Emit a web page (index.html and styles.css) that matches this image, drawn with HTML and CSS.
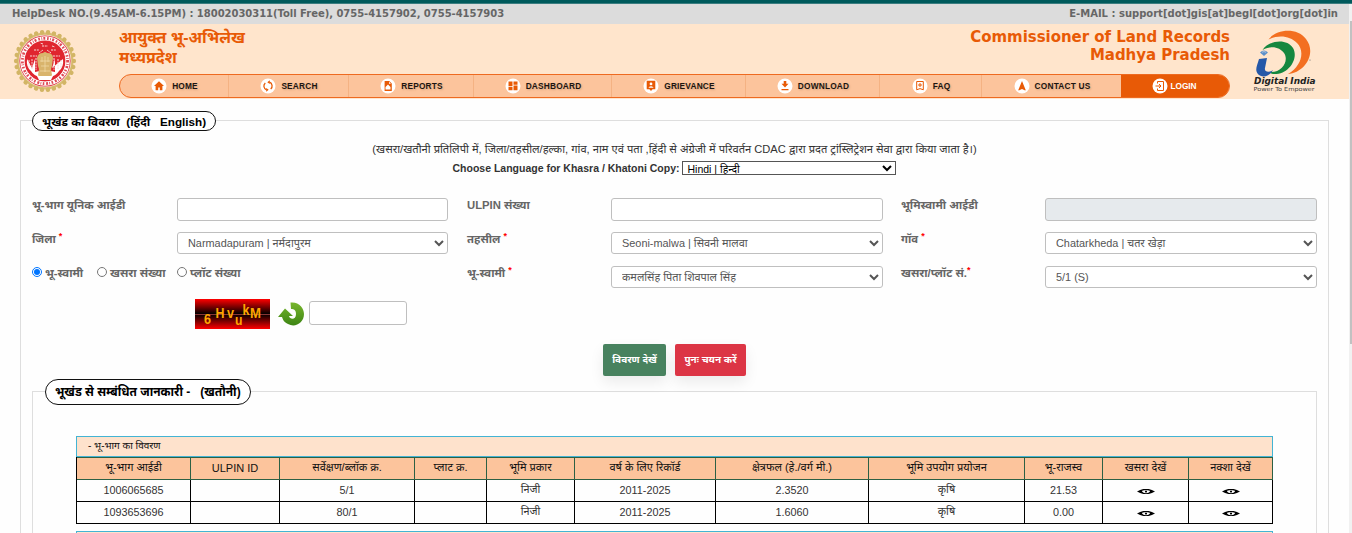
FILE: index.html
```html
<!DOCTYPE html>
<html lang="hi">
<head>
<meta charset="utf-8">
<title>Commissioner of Land Records</title>
<link rel="stylesheet" href="styles.css">
</head>
<body>
<div class="teal"></div>
<div class="helpbar"><span class="help-l">HelpDesk NO.(9.45AM-6.15PM) : 18002030311(Toll Free), 0755-4157902, 0755-4157903</span><span class="help-r">E-MAIL : support[dot]gis[at]begl[dot]org[dot]in</span></div>
<header class="header">
  <svg class="emblem" viewBox="0 0 64 64">
    <circle cx="32" cy="32" r="28.500" fill="#d8bd72"/>
    <circle cx="32" cy="32" r="28.900" fill="none" stroke="#d2b565" stroke-width="4.400" stroke-linecap="round" stroke-dasharray="0.1 5.944"/>
    <circle cx="32" cy="32" r="26.300" fill="#f6e6dc"/>
    <circle cx="32" cy="32" r="25.600" fill="#e0353f"/>
    <circle cx="32" cy="32" r="22.600" fill="none" stroke="#fff" stroke-width="4.400"/>
    <circle cx="32" cy="32" r="22.600" fill="none" stroke="#df4a55" stroke-width="2.800" stroke-dasharray="1.6 1.5 .8 1.2 2 1.9"/>
    <circle cx="32" cy="32" r="20" fill="#e0252f"/>
    <path d="M14 30q-1 8 4 12 3 5 9 6v-6l-5 1v-13l-3 9zM50 30q1 8-4 12-3 5-9 6v-6l5 1v-13l-3 9z" fill="#fff"/>
    <path d="M17 27h7M40 27h7M21 21h5M38 21h5M29 17h6M26 24l4-3M38 24l-4-3M30 15l-3-1M39 17l3 1M16 31v8M19 30v10M23 29v12M41 29v12M45 30v10M48 31v8" fill="none" stroke="#f8d8d8" stroke-width="1" stroke-dasharray="2 .8"/>
    <path d="M24 29q1-5 6-5 2-2 4 0 6 0 6 5l-1 8-1 3 1 6-2 3h-10l-2-3 1-6-1-3z" fill="#d9b46c"/>
    <path d="M27 32h10M28 37h8M27 42h10M29 28v5M35 28v5M32 27v16" fill="none" stroke="#f3dcae" stroke-width=".7"/>
    <path d="M24 47h16l-2 4H26z" fill="#fff"/>
  </svg>
  <div class="mid">
    <div class="titles">
      <div class="t-hi"><div>आयुक्त भू-अभिलेख</div><div>मध्यप्रदेश</div></div>
      <div class="t-en"><div class="t-en1">Commissioner of Land Records</div><div class="t-en2">Madhya Pradesh</div></div>
    </div>
    <nav class="nav">
      <a class="n1"><svg viewBox="0 0 16 16"><circle cx="8" cy="8" r="7.500"/><path d="M8 3.200 3 8h1.600v4.200h2.600V9.400h1.600v2.800h2.600V8H13z"/></svg>HOME</a>
      <a class="n2"><svg viewBox="0 0 16 16"><circle cx="8" cy="8" r="7.500"/><path class="ln" d="M9.500 4.200A4 4 0 0 1 10.700 11M6.500 11.800A4 4 0 0 1 5.300 5"/><path d="M9.800 2.300v3.800L7.300 4.200zM6.200 9.900v3.800l2.500-1.900z"/></svg>SEARCH</a>
      <a class="n3"><svg viewBox="0 0 16 16"><circle cx="8" cy="8" r="7.500"/><path d="M4.600 3h4.600l2.600 2.600V13H4.600z"/><path class="wh" d="M8 6.500 10.500 9v2.500h-5V9zM9 3.700v2.100h2z"/></svg>REPORTS</a>
      <a class="n4"><svg viewBox="0 0 16 16"><circle cx="8" cy="8" r="7.500"/><path d="M3.500 3.500h4v4.700h-4zM3.500 9h4v3.300h-4zM8.500 3.500h4v3.300h-4zM8.500 7.600h4v4.700h-4z"/></svg>DASHBOARD</a>
      <a class="n5"><svg viewBox="0 0 16 16"><circle cx="8" cy="8" r="7.500"/><path d="M3.700 2.800h8.600v8.400h-2.700L8 13l-1.600-1.800H3.700z"/><path class="wh" d="M5.400 9.700q2.600-2.700 5.200 0z"/><circle cx="8" cy="5.900" r="1.400"/></svg>GRIEVANCE</a>
      <a class="n6"><svg viewBox="0 0 16 16"><circle cx="8" cy="8" r="7.500"/><path d="M6.700 3h2.600v2.800h2.200L8 9.400 4.500 5.800h2.200zM4.500 11h7v1.200h-7z"/></svg>DOWNLOAD</a>
      <a class="n7"><svg viewBox="0 0 16 16"><circle cx="8" cy="8" r="7.500"/><path class="ln thin" d="M4.700 3.500h6.600v8.300L8 10.600l-3.300 1.200zM8 5v4M6 7h4"/></svg>FAQ</a>
      <a class="n8"><svg viewBox="0 0 16 16"><circle cx="8" cy="8" r="7.500"/><path d="M8 3 4.300 12l.5.4L8 11l3.200 1.400.5-.4z"/></svg>CONTACT US</a>
      <a class="n9"><svg viewBox="0 0 16 16"><circle cx="8" cy="8" r="7.500"/><path class="ln thin" d="M5.500 5.500V3.500h6v9h-6v-2M3.500 8h5M7 6l2 2-2 2"/></svg>LOGIN</a>
    </nav>
  </div>
  <svg class="di" viewBox="0 0 66 64">
    <path d="M16.500 10.500C24 0 45-2 54 10c11 14-1 34-18 35 14-8 17-23 9-31C38 7 27 5.500 16.500 10.500z" fill="#f36f21"/>
    <path d="M10.500 21C17 11 35 9 41 19c6 10-4 27-20 26-2 0-3-1-2-2 12 0 18-12 13-19C28 18 19 16 10.500 21z" fill="#15873f"/>
    <path d="M7 30l8-1-2 10c-1 4 4 5 8 2-3 6-10 8-14 5-5-4-2-9 0-16z" fill="#2558a8"/>
    <path d="M8 23.500q4-4 8 0l-4 3.500z" fill="#5b8fca"/><path d="M10 23.300q2-1.500 4 0" fill="none" stroke="#d3dbe4" stroke-width=".7"/>
    <circle cx="58" cy="31" r=".6" fill="#666"/>
    <text x="2" y="55" textLength="61.500" lengthAdjust="spacingAndGlyphs" class="di-a">Digital India</text>
    <text x="1.500" y="61.500" textLength="61" lengthAdjust="spacingAndGlyphs" class="di-b">Power To Empower</text>
  </svg>
</header>

<fieldset class="outer">
  <legend class="pill p1">भूखंड का विवरण &nbsp;(हिंदी &nbsp;&nbsp;English)</legend>
  <div class="note">(खसरा/खतौनी प्रतिलिपी में, जिला/तहसील/हल्का, गांव, नाम एवं पता ,हिंदी से अंग्रेजी में परिवर्तन CDAC द्वारा प्रदत ट्रांस्लिट्रेशन सेवा द्वारा किया जाता है।)</div>
  <div class="lang"><b>Choose Language for Khasra / Khatoni Copy:</b><select><option>Hindi | हिन्दी</option></select></div>
  <div class="form">
    <label>भू-भाग यूनिक आईडी</label><input>
    <label>ULPIN संख्या</label><input>
    <label>भूमिस्वामी आईडी</label><input class="off" disabled>
    <label>जिला<i>*</i></label><select><option>Narmadapuram | नर्मदापुरम</option></select>
    <label>तहसील<i>*</i></label><select><option>Seoni-malwa | सिवनी मालवा</option></select>
    <label>गॉव<i>*</i></label><select><option>Chatarkheda | चतर खेड़ा</option></select>
    <div class="radios"><input type="radio" name="r" checked><span class="r1">भू-स्वामी</span><input type="radio" name="r"><span class="r2">खसरा संख्या</span><input type="radio" name="r"><span class="r3">प्लॉट संख्या</span></div><div></div>
    <label>भू-स्वामी<i>*</i></label><select><option>कमलसिंह पिता शिवपाल सिंह</option></select>
    <label>खसरा/प्लॉट सं.<i class="tight">*</i></label><select><option>5/1 (S)</option></select>
  </div>
  <div class="captcha">
    <svg class="cap" viewBox="0 0 75 30">
      <defs><linearGradient id="g" x2="0" y2="1"><stop offset="0" stop-color="#f00"/><stop offset=".5"/><stop offset="1" stop-color="#f00"/></linearGradient></defs>
      <rect width="75" height="30" fill="url(#g)"/><path d="M0 15.500h75" stroke="#a44" stroke-width=".8"/>
      <text x="9" y="24.500" textLength="7" lengthAdjust="spacingAndGlyphs">6</text><text x="20.500" y="19" textLength="9" lengthAdjust="spacingAndGlyphs">H</text><text x="32" y="19" textLength="7" lengthAdjust="spacingAndGlyphs">v</text><text x="40" y="25.500" textLength="7.500" lengthAdjust="spacingAndGlyphs">u</text><text x="47.500" y="16" textLength="7" lengthAdjust="spacingAndGlyphs">k</text><text x="55" y="18.500" textLength="11" lengthAdjust="spacingAndGlyphs">M</text>
    </svg>
    <svg class="ref" viewBox="0 0 26 24"><defs><linearGradient id="h" x2="0" y2="1"><stop offset="0" stop-color="#78b62d"/><stop offset="1" stop-color="#3d8514"/></linearGradient></defs><path d="M12.500 .5C21-.5 26 6 26 12c0 9-9 14-16 10-4-2-5-4-6-7H0L7 6.500l8 7.500h-4c1 4 7 4 7-2 0-4-2-5-5-5z" fill="url(#h)"/></svg>
    <input>
  </div>
  <div class="btns"><button class="go">विवरण देखें</button><button class="re">पुनः चयन करें</button></div>
  <fieldset class="inner">
    <legend class="pill p2">भूखंड से सम्बंधित जानकारी - &nbsp;&nbsp;(खतौनी)</legend>
    <div class="cap-row">- भू-भाग का विवरण</div>
    <div class="grid">
      <div class="th">भू-भाग आईडी</div><div class="th">ULPIN ID</div><div class="th">सर्वेक्षण/ब्लॉक क्र.</div><div class="th">प्लाट क्र.</div><div class="th">भूमि प्रकार</div><div class="th">वर्ष के लिए रिकॉर्ड</div><div class="th">क्षेत्रफल (हे./वर्ग मी.)</div><div class="th">भूमि उपयोग प्रयोजन</div><div class="th">भू-राजस्व</div><div class="th">खसरा देखें</div><div class="th">नक्शा देखें</div>
      <div>1006065685</div><div></div><div>5/1</div><div></div><div>निजी</div><div>2011-2025</div><div>2.3520</div><div>कृषि</div><div>21.53</div>
      <div><svg class="eye" viewBox="0 0 18 5"><path d="M0 2.500Q9-3 18 2.500 9 8 0 2.500z"/><path class="w" d="M5 2.500q0-1.500 4-1.500t4 1.500q-1 1.700-4 1.700T5 2.500z"/><circle cx="9" cy="2.600" r="1.100"/></svg></div><div><svg class="eye" viewBox="0 0 18 5"><path d="M0 2.500Q9-3 18 2.500 9 8 0 2.500z"/><path class="w" d="M5 2.500q0-1.500 4-1.500t4 1.500q-1 1.700-4 1.700T5 2.500z"/><circle cx="9" cy="2.600" r="1.100"/></svg></div>
      <div>1093653696</div><div></div><div>80/1</div><div></div><div>निजी</div><div>2011-2025</div><div>1.6060</div><div>कृषि</div><div>0.00</div>
      <div><svg class="eye" viewBox="0 0 18 5"><path d="M0 2.500Q9-3 18 2.500 9 8 0 2.500z"/><path class="w" d="M5 2.500q0-1.500 4-1.500t4 1.500q-1 1.700-4 1.700T5 2.500z"/><circle cx="9" cy="2.600" r="1.100"/></svg></div><div><svg class="eye" viewBox="0 0 18 5"><path d="M0 2.500Q9-3 18 2.500 9 8 0 2.500z"/><path class="w" d="M5 2.500q0-1.500 4-1.500t4 1.500q-1 1.700-4 1.700T5 2.500z"/><circle cx="9" cy="2.600" r="1.100"/></svg></div>
    </div>
    <div class="cap-row next"></div>
  </fieldset>
</fieldset>
<div class="scroll"></div>
</body>
</html>
```

FILE: styles.css
```css
* { box-sizing: border-box; }
html, body { margin: 0; height: 533px; overflow: hidden; }
body { background: #fefefe; font-family: "Liberation Sans", "Noto Sans Devanagari", "Noto Sans", sans-serif; font-size: 11px; color: #333; }
.teal { height: 4px; background: #005a5c; border-bottom: 1px solid #3a7d80; }
.helpbar { height: 20px; background: #dcdcdc; display: flex; justify-content: space-between; padding: 0 14px 0 12px; font: bold 10px/20px "DejaVu Sans", sans-serif; color: #666; white-space: nowrap; }
.help-l { letter-spacing: -.035px; }
.header { height: 75px; background: #ffe5cc; display: flex; }
.emblem { width: 64px; height: 64px; margin: 5px 42px 0 13px; flex: none; }
.mid { width: 1111px; flex: none; }
.titles { height: 50px; display: flex; justify-content: space-between; color: #e85a06; white-space: nowrap; }
.t-hi { font-size: 15.900px; font-weight: bold; line-height: 20px; padding-top: 4px; }
.t-en { font: bold 15px/18px "DejaVu Sans", sans-serif; letter-spacing: -.04px; text-align: right; padding-top: 4px; }
.nav { height: 24px; border: 1px solid #ee6a20; border-radius: 12px; background: #fcc49c; display: flex; overflow: hidden; }
.nav a { display: flex; align-items: center; justify-content: center; gap: 5px; border-right: 1px solid #f4b283; color: #1c1510; font-size: 8.300px; font-weight: bold; letter-spacing: .2px; white-space: nowrap; text-shadow: 1px 1px 2px #d9a27c; padding-left: 1px; }
.nav svg { width: 16px; height: 16px; fill: #e85a06; }
.nav circle, .nav .wh { fill: #fff; }
.nav .ln { fill: none; stroke: #e85a06; stroke-width: 1.300; }
.nav .thin { stroke-width: 1; }
.nav .n1 { width: 109px; } .nav .n2 { width: 120px; } .nav .n3 { width: 125px; } .nav .n4 { width: 138px; } .nav .n5 { width: 134px; } .nav .n6 { width: 134px; } .nav .n7 { width: 102px; } .nav .n8 { width: 139px; border: 0; }
.nav .n9 { width: 108px; background: #e85a06; color: #fff; border: 0; text-shadow: none; letter-spacing: -.1px; gap: 3px; padding: 0 2px 0 0; }
.di { width: 66px; height: 64px; margin: 5px 0 0 22px; }
.di-a { font: italic bold 8.500px "DejaVu Sans", sans-serif; fill: #222; }
.di-b { font: 5.500px "DejaVu Sans", sans-serif; fill: #444; }
fieldset { min-width: 0; margin: 0; padding: 0; border: 1px solid #dedede; border-bottom: 0; }
.outer { width: 1309px; height: 423px; margin: 11px 0 0 20px; }
.pill { position: relative; top: 1px; border: 1px solid #111; background: #fff; color: #000; font-weight: bold; white-space: nowrap; text-align: left; padding: 0 0 0 9px; }
.p1 { width: 184px; height: 20px; line-height: 19px; border-radius: 10px; margin-left: 11px; font-size: 11.700px; }
.p2 { width: 206px; height: 26px; line-height: 24px; border-radius: 13px; margin-left: 12px; font-size: 12px; }
.note { height: 20px; margin-top: 9px; line-height: 20px; text-align: center; white-space: nowrap; font-size: 11.130px; }
.lang { height: 18px; display: flex; justify-content: center; align-items: center; gap: 3px; white-space: nowrap; }
.lang b { font-size: 10.500px; }
.lang select { width: 214px; height: 14px; padding: 0; border: 1px solid #555; background: #fff; font: 10.500px/12px "Liberation Sans", "Noto Sans Devanagari", sans-serif; color: #000; }
.form { margin: 21px 0 0 11px; display: grid; grid-template-columns: 145px 271px 19px 144px 272px 18px 144px 272px; grid-auto-rows: 34px; }
.form > *:nth-child(6n+1) { grid-column: 1; }
.form > *:nth-child(6n+2) { grid-column: 2; }
.form > *:nth-child(6n+3) { grid-column: 4; }
.form > *:nth-child(6n+4) { grid-column: 5; }
.form > *:nth-child(6n+5) { grid-column: 7; }
.form > *:nth-child(6n+6) { grid-column: 8; }
label, .radios { font-size: 11.300px; font-weight: bold; color: #666; line-height: 14px; white-space: nowrap; }
label i { color: red; font-style: normal; font-size: 9px; line-height: 0; margin-left: 3px; position: relative; top: -4px; }
label i.tight { margin-left: 0; }
.form > input, .form > select, .captcha input { height: 23px; border: 1px solid #bfbfbf; border-radius: 3px; background: #fff; padding: 0 6px; font: 10.900px "Liberation Sans", "Noto Sans Devanagari", sans-serif; color: #555; }
.form > select { height: 22px; }
.form > input.off { background: #e6eaed; }
.radios { display: flex; align-items: flex-start; }
.radios input { width: 10px; height: 10px; margin: 1px 3px 0 0; flex: none; }
.radios span { flex: none; }
.r1 { width: 52px; } .r2 { width: 67px; }
.captcha { display: flex; margin: -1px 0 0 174px; height: 30px; }
.cap { width: 75px; height: 30px; }
.cap text { font: bold 15px "Liberation Sans", sans-serif; fill: #ffa600; }
.ref { width: 26px; height: 24px; margin: 3px 5px 0 8px; }
.captcha input { width: 98px; height: 24px; margin: 2px 0 0; padding: 0; }
.btns { display: flex; gap: 9px; margin: 15px 0 0 582px; }
.btns button { height: 32px; border: 0; border-radius: 2px; padding: 0; color: #fff; font: bold 10px "Liberation Sans", "Noto Sans Devanagari", sans-serif; white-space: nowrap; box-shadow: 0 6px 14px rgba(0,0,0,.08); }
.go { width: 63px; background: #48825f; } .re { width: 71px; background: #dc3545; }
.inner { width: 1285px; height: 155px; margin: 2px 0 0 11px; }
.cap-row { width: 1197px; height: 21px; margin: 32px 0 0 43px; border: 1px solid #43b4d4; background: #fee2cc; color: #111; line-height: 17px; padding-left: 11px; font-size: 10px; }
.grid { width: 1197px; margin-left: 43px; display: grid; grid-template-columns: 114px 89px 135px 72px 88px 141px 153px 156px 78px 86px 84px; grid-template-rows: 23px 22px 22px; border-left: 1px solid #000; }
.grid > div { border: solid #000; border-width: 0 1px 1px 0; display: flex; align-items: center; justify-content: center; white-space: nowrap; padding-bottom: 1px; font-size: 10.800px; }
.grid > .th { background: #fcc49c; border-color: #2c6044; border-top-width: 1px; color: #111; font-size: 11px; }
.eye { width: 18px; height: 5px; margin-top: 2px; } .eye .w { fill: #fff; }
.next { margin-top: 7px; height: 2px; border-bottom: 0; }
.scroll { position: absolute; right: 0; top: 4px; width: 3px; height: 529px; background: linear-gradient(#c1c1c1, #c1c1c1) 1px 17px / 2px 323px no-repeat #f1f1f1; }
```
